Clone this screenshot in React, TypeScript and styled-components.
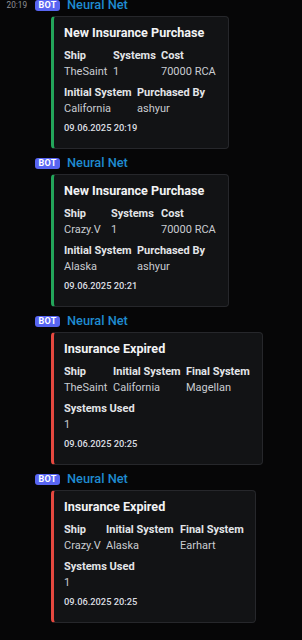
import React from 'react'
import styled, { createGlobalStyle } from 'styled-components'

const GlobalStyle = createGlobalStyle`
  html, body {
    margin: 0;
    padding: 0;
    background: #060607;
  }
  body {
    font-family: Roboto, "Noto Sans", "Liberation Sans", sans-serif;
    -webkit-font-smoothing: antialiased;
  }
`

interface Field {
  name: string
  value: string
}

interface EmbedData {
  time?: string
  color: string
  width: number
  title: string
  rows: { cols: string; fields: Field[] }[]
  footer: string
}

const Feed = styled.div`
  display: flex;
  flex-direction: column;
  gap: 5px;
  margin-top: -4px;
`

const Message = styled.div`
  display: flex;
  flex-direction: column;
  gap: 2px;
`

const Header = styled.div`
  display: flex;
  align-items: center;
  height: 18px;
`

const Gutter = styled.div`
  width: 35px;
  padding-right: 8px;
  box-sizing: border-box;
  text-align: right;
  font-size: 8.2px;
  color: #8e9297;
`

const Badge = styled.span`
  display: inline-flex;
  align-items: center;
  justify-content: center;
  width: 25px;
  height: 11px;
  border-radius: 3px;
  background: #5865f2;
  color: #fff;
  font-size: 9px;
  font-weight: 700;
  letter-spacing: 0.2px;
`

const Author = styled.span`
  margin-left: 7px;
  font-size: 12.8px;
  font-weight: 500;
  color: #1f8bcf;
  line-height: 18px;
`

const Card = styled.div<{ $accent: string; $width: number }>`
  margin-left: 51px;
  width: ${p => p.$width}px;
  box-sizing: border-box;
  background: #121315;
  border: 1px solid #26272b;
  border-left: 3px solid ${p => p.$accent};
  border-radius: 4px;
  padding: 7px 8px 13px 10px;
  display: flex;
  flex-direction: column;
`

const Title = styled.div`
  font-size: 12.6px;
  font-weight: 700;
  line-height: 18px;
  color: #f2f3f5;
`

const Fields = styled.div`
  display: flex;
  flex-direction: column;
  gap: 5px;
  margin-top: 6px;
`

const FieldRow = styled.div<{ $cols: string }>`
  display: grid;
  grid-template-columns: ${p => p.$cols};
`

const FieldName = styled.div`
  font-size: 11px;
  font-weight: 700;
  line-height: 16px;
  color: #e3e5e8;
  white-space: nowrap;
`

const FieldValue = styled.div`
  font-size: 11px;
  line-height: 16px;
  color: #c9ccd1;
  white-space: nowrap;
`

const Footer = styled.div`
  margin-top: 4px;
  font-size: 9.3px;
  font-weight: 500;
  line-height: 14px;
  color: #dbdee1;
`

const purchaseCols = ['49px 48px 1fr', '73px 1fr']

const messages: EmbedData[] = [
  {
    time: '20:19',
    color: '#23a55a',
    width: 178,
    title: 'New Insurance Purchase',
    rows: [
      { cols: purchaseCols[0], fields: [{ name: 'Ship', value: 'TheSaint' }, { name: 'Systems', value: '1' }, { name: 'Cost', value: '70000 RCA' }] },
      { cols: purchaseCols[1], fields: [{ name: 'Initial System', value: 'California' }, { name: 'Purchased By', value: 'ashyur' }] },
    ],
    footer: '09.06.2025 20:19',
  },
  {
    color: '#23a55a',
    width: 178,
    title: 'New Insurance Purchase',
    rows: [
      { cols: '47px 50px 1fr', fields: [{ name: 'Ship', value: 'Crazy.V' }, { name: 'Systems', value: '1' }, { name: 'Cost', value: '70000 RCA' }] },
      { cols: purchaseCols[1], fields: [{ name: 'Initial System', value: 'Alaska' }, { name: 'Purchased By', value: 'ashyur' }] },
    ],
    footer: '09.06.2025 20:21',
  },
  {
    color: '#e5483f',
    width: 212,
    title: 'Insurance Expired',
    rows: [
      { cols: '49px 73px 1fr', fields: [{ name: 'Ship', value: 'TheSaint' }, { name: 'Initial System', value: 'California' }, { name: 'Final System', value: 'Magellan' }] },
      { cols: '1fr', fields: [{ name: 'Systems Used', value: '1' }] },
    ],
    footer: '09.06.2025 20:25',
  },
  {
    color: '#e5483f',
    width: 205,
    title: 'Insurance Expired',
    rows: [
      { cols: '42px 74px 1fr', fields: [{ name: 'Ship', value: 'Crazy.V' }, { name: 'Initial System', value: 'Alaska' }, { name: 'Final System', value: 'Earhart' }] },
      { cols: '1fr', fields: [{ name: 'Systems Used', value: '1' }] },
    ],
    footer: '09.06.2025 20:25',
  },
]

export default function App() {
  return (
    <>
      <GlobalStyle />
      <Feed>
        {messages.map((m, i) => (
          <Message key={i}>
            <Header>
              <Gutter>{m.time}</Gutter>
              <Badge>BOT</Badge>
              <Author>Neural Net</Author>
            </Header>
            <Card $accent={m.color} $width={m.width}>
              <Title>{m.title}</Title>
              <Fields>
                {m.rows.map((r, j) => (
                  <FieldRow key={j} $cols={r.cols}>
                    {r.fields.map(f => (
                      <div key={f.name}>
                        <FieldName>{f.name}</FieldName>
                        <FieldValue>{f.value}</FieldValue>
                      </div>
                    ))}
                  </FieldRow>
                ))}
              </Fields>
              <Footer>{m.footer}</Footer>
            </Card>
          </Message>
        ))}
      </Feed>
    </>
  )
}
